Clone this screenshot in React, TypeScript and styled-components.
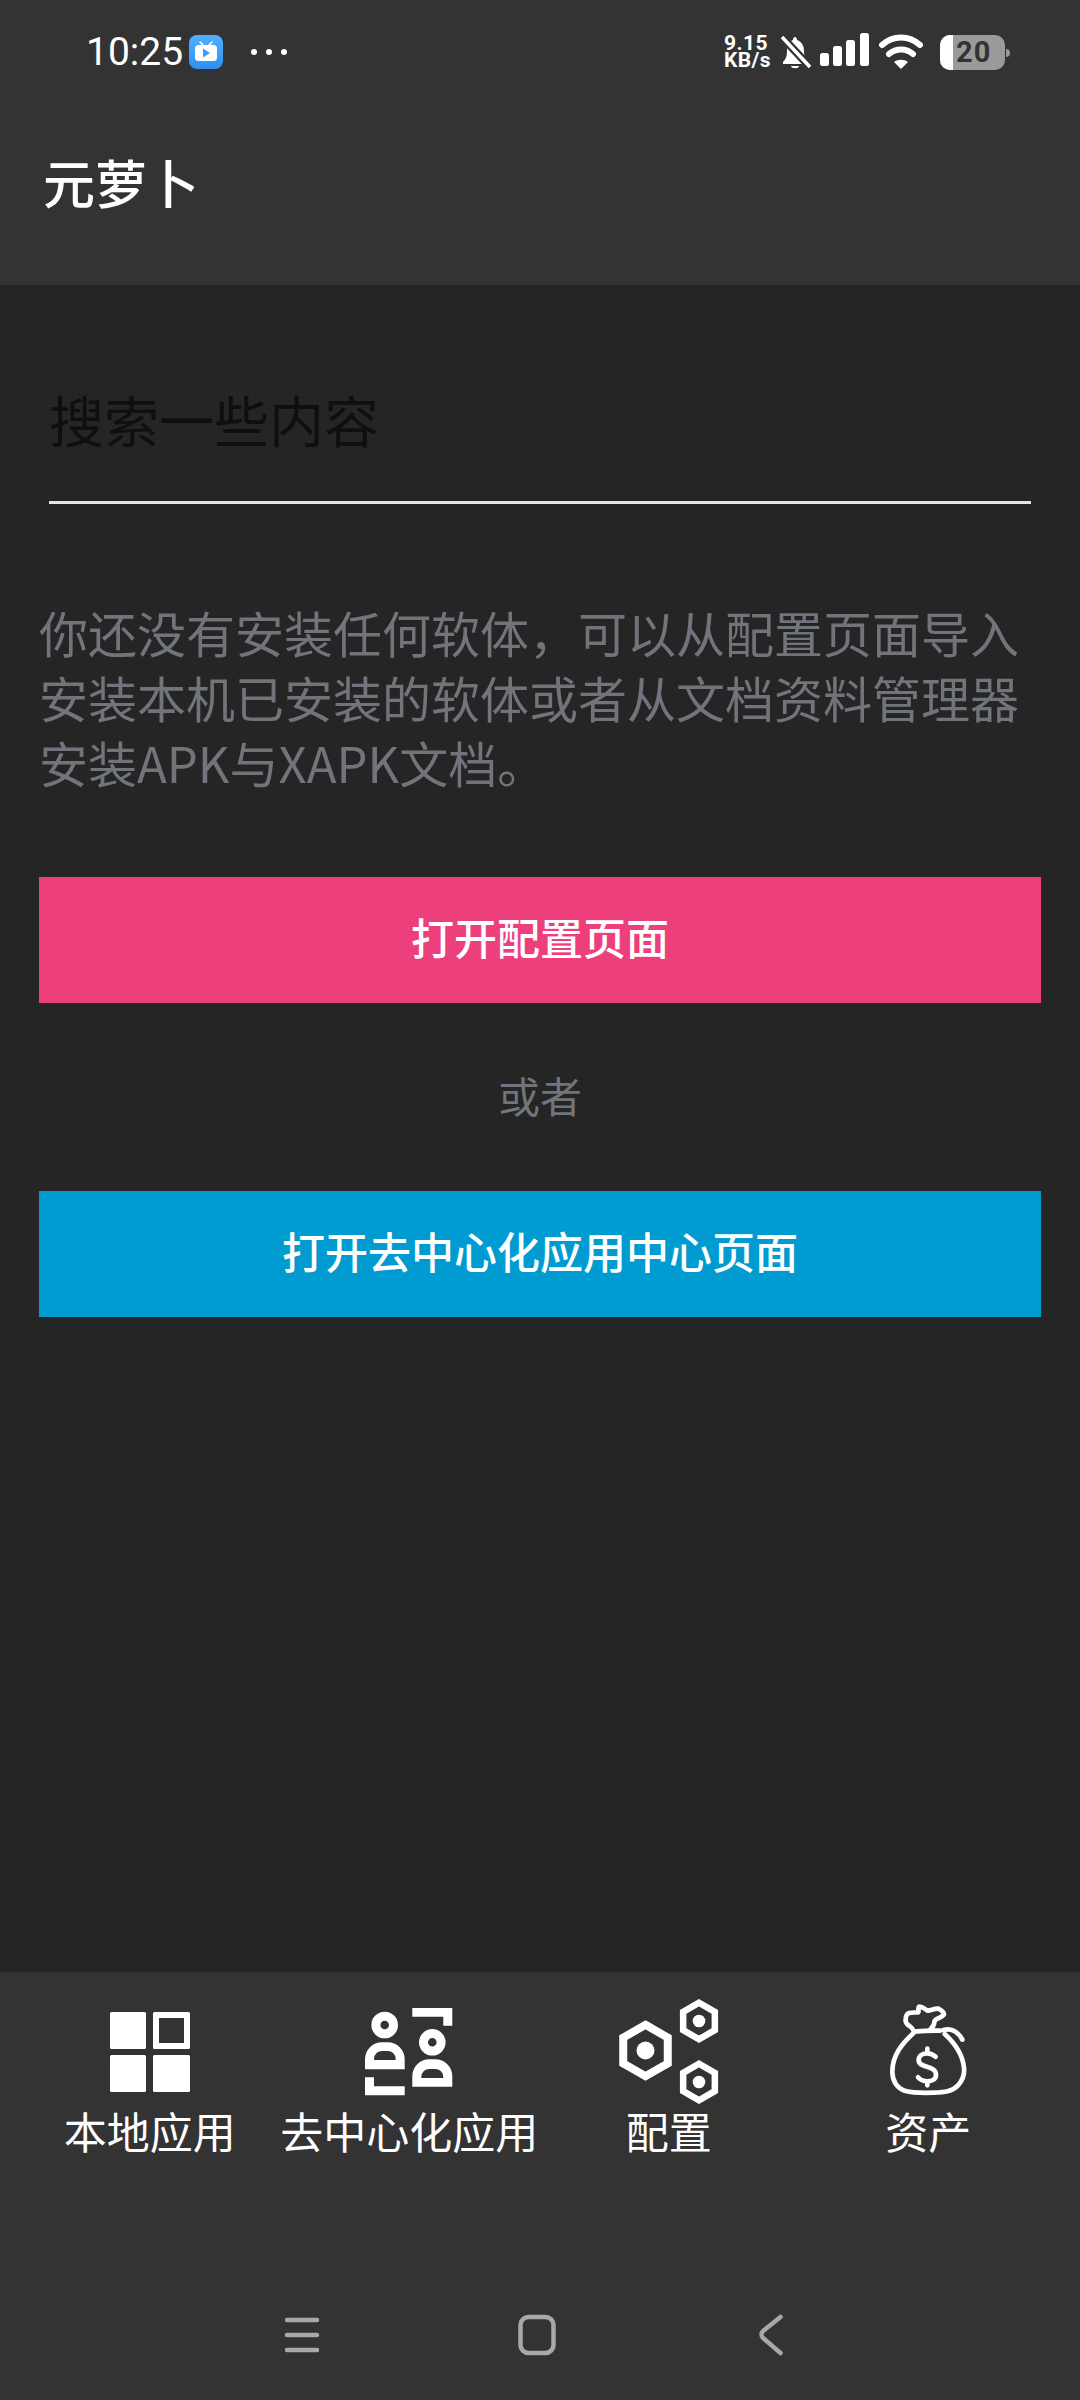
import React from "react";
import styled, { createGlobalStyle } from "styled-components";

const CJK = `"Noto Sans CJK SC", "Noto Sans", sans-serif`;

const Global = createGlobalStyle`
  html, body { margin: 0; padding: 0; background: #252525; }
  * { box-sizing: border-box; }
`;

const Screen = styled.div`
  width: 1080px;
  height: 2400px;
  display: flex;
  flex-direction: column;
  background: #252525;
  font-family: ${CJK};
  overflow: hidden;
`;

const Header = styled.header`
  height: 285px;
  background: #333333;
  display: flex;
  flex-direction: column;
`;

const StatusBar = styled.div`
  height: 104px;
  padding: 0 75px 0 86px;
  display: flex;
  align-items: center;
  justify-content: space-between;
`;

const StatusLeft = styled.div`
  display: flex;
  align-items: center;
`;

const Clock = styled.span`
  font-family: Roboto, sans-serif;
  font-size: 39px;
  color: #ffffff;
  line-height: 1;
  margin-right: 6px;
`;

const AppBadge = styled.svg`
  width: 34px;
  height: 34px;
  display: block;
`;

const MoreDots = styled.svg`
  width: 36px;
  height: 10px;
  margin-left: 28px;
  display: block;
`;

const StatusRight = styled.div`
  display: flex;
  align-items: center;
`;

const NetSpeed = styled.div`
  font-family: Roboto, sans-serif;
  font-weight: 700;
  font-size: 21px;
  line-height: 17px;
  letter-spacing: 0.4px;
  color: #ffffff;
  width: 50px;
  margin-right: 6px;
`;

const StatusIcon = styled.svg<{ $w: number; $gap: number }>`
  width: ${(p) => p.$w}px;
  height: 40px;
  display: block;
  margin-right: ${(p) => p.$gap}px;
`;

const Battery = styled.div`
  position: relative;
  width: 65px;
  height: 35px;
  border-radius: 10px;
  display: flex;
  background: #9a9a9a;
`;

const BatteryFill = styled.div`
  width: 13px;
  background: #ffffff;
  border-radius: 10px 0 0 10px;
`;

const BatteryLevel = styled.div`
  flex: 1;
  font-family: Roboto, sans-serif;
  font-weight: 700;
  font-size: 29px;
  line-height: 35px;
  letter-spacing: 1px;
  color: #333333;
  text-align: left;
  padding-left: 3px;
`;

const BatteryNub = styled.span`
  position: absolute;
  right: -5px;
  top: 14px;
  width: 4px;
  height: 8px;
  background: #9a9a9a;
  border-radius: 0 4px 4px 0;
`;

const AppBar = styled.div`
  flex: 1;
  padding: 0 43px 24px;
  display: flex;
  align-items: center;
`;

const Title = styled.h1`
  margin: 0;
  font-size: 52px;
  font-weight: 500;
  color: #ffffff;
  line-height: 1.2;
`;

const Main = styled.main`
  flex: 1;
  display: flex;
  flex-direction: column;
  padding: 0 39px;
`;

const SearchField = styled.input`
  display: block;
  margin: 97px 0 0 10px;
  width: 982px;
  height: 122px;
  background: transparent;
  border: none;
  border-bottom: 3px solid #e6e6e6;
  outline: none;
  padding: 0 0 47px 0;
  font-family: ${CJK};
  font-size: 55px;
  color: #ffffff;
  &::placeholder {
    color: #0f0f0f;
    opacity: 1;
  }
`;

const Notice = styled.p`
  margin: 95px 0 0;
  font-size: 49px;
  line-height: 65px;
  font-weight: 400;
  color: #71747b;
  width: 1002px;
`;

const ActionButton = styled.button<{ $bg: string }>`
  display: block;
  width: 1002px;
  height: 126px;
  border: none;
  padding: 0 0 8px;
  background: ${(p) => p.$bg};
  color: #ffffff;
  font-family: ${CJK};
  font-size: 43px;
  font-weight: 500;
`;

const Separator = styled.div`
  height: 188px;
  padding-bottom: 6px;
  display: flex;
  align-items: center;
  justify-content: center;
  font-size: 42px;
  color: #71747b;
`;

const TopAction = styled.div`
  margin-top: 83px;
`;

const Footer = styled.footer`
  height: 428px;
  background: #333333;
  display: flex;
  flex-direction: column;
`;

const Tabs = styled.nav`
  padding: 27px 0 0 20px;
  display: grid;
  grid-template-columns: repeat(4, 259.5px);
`;

const Tab = styled.div`
  display: flex;
  flex-direction: column;
  align-items: center;
`;

const TabIconBox = styled.div`
  height: 105px;
  display: flex;
  align-items: center;
  justify-content: center;
`;

const TabLabel = styled.span`
  margin-top: -2px;
  font-size: 43px;
  line-height: 56px;
  color: #ffffff;
`;

const SystemNav = styled.div`
  margin-top: 152px;
  height: 50px;
  padding-left: 284px;
  display: flex;
  align-items: center;
`;

const SysIcon = styled.svg<{ $w: number; $gap: number }>`
  width: ${(p) => p.$w}px;
  height: 44px;
  margin-right: ${(p) => p.$gap}px;
  display: block;
  fill: none;
  stroke: #a8a8a8;
  stroke-width: 4.5;
  stroke-linecap: round;
  stroke-linejoin: round;
`;

const GridIcon = () => (
  <svg width="80" height="80" viewBox="0 0 80 80" fill="#fff">
    <rect x="0" y="0" width="36" height="37" rx="1.5" />
    <path fillRule="evenodd" d="M44.5 0h34A1.5 1.5 0 0 1 80 1.5v34a1.5 1.5 0 0 1-1.5 1.5h-34A1.5 1.5 0 0 1 43 35.500v-34A1.500 1.500 0 0 1 44.500 0zM49 6v25h25V6z" />
    <rect x="0" y="43" width="36" height="37" rx="1.500" />
    <rect x="43" y="43" width="37" height="37" rx="1.500" />
  </svg>
);

const DecentralIcon = () => (
  <svg width="88" height="88" viewBox="0 0 88 88" fill="#fff">
    <path fillRule="evenodd" d="M19.700 3.700a13.300 13.300 0 1 0 0 26.600 13.300 13.300 0 0 0 0-26.600zm0 9a4.300 4.300 0 1 1 0 8.600 4.300 4.300 0 0 1 0-8.600z" />
    <path fillRule="evenodd" d="M0 61.300V51.300a17 17 0 0 1 17-17h5.700a17 17 0 0 1 17 17v10zM9 52h21.700v-1a8 8 0 0 0-8-8H17a8 8 0 0 0-8 8z" />
    <path d="M0 69.300h9v9h30.700v9H0z" />
    <path d="M47.300 0h40v17.700h-9V8.700h-31z" />
    <path fillRule="evenodd" d="M67.300 21a13.300 13.300 0 1 0 0 26.600 13.300 13.300 0 0 0 0-26.600zm0 9a4.300 4.300 0 1 1 0 8.600 4.300 4.300 0 0 1 0-8.600z" />
    <path fillRule="evenodd" d="M47.300 78.700V68.300a17 17 0 0 1 17-17h6a17 17 0 0 1 17 17v10.400zM56.300 70h22v-1a8 8 0 0 0-8-8h-6a8 8 0 0 0-8 8z" />
  </svg>
);

const HexNut = ({ cx, cy, r, sw, dot }: { cx: number; cy: number; r: number; sw: number; dot: number }) => {
  const h = r * 0.866;
  const d = `M${cx} ${cy - r}L${cx + h} ${cy - r / 2}V${cy + r / 2}L${cx} ${cy + r}L${cx - h} ${cy + r / 2}V${cy - r / 2}Z`;
  return (
    <>
      <path d={d} fill="none" stroke="#fff" strokeWidth={sw} strokeLinejoin="miter" />
      <circle cx={cx} cy={cy} r={dot} fill="#fff" />
    </>
  );
};

const HexIcon = () => (
  <svg width="100" height="105" viewBox="1 0 100 105">
    <HexNut cx={27.500} cy={51.500} r={25.700} sw={8} dot={9} />
    <HexNut cx={81} cy={22} r={18.300} sw={6.500} dot={6.300} />
    <HexNut cx={81} cy={83} r={18.300} sw={6.500} dot={6.300} />
  </svg>
);

const MoneyBagIcon = () => (
  <svg width="88" height="103" viewBox="0 0 264 309" fill="none" stroke="#fff" strokeWidth="14" strokeLinecap="round" strokeLinejoin="round">
    <path d="M88 100C55 130 25 165 25 215c0 25 12 50 40 58 25 7 55 6 85 5 30-1 55-3 72-22 13-14 20-32 18-52-4-42-28-75-58-102" />
    <path d="M90 95c25-2 55-4 78-3M90 95c-2-7-6-12-12-16-7-4-14-8-13-18 0-11 4-20 10-22 9-2 18-1 28-2 2-6-2-12 2-17 8-2 16 6 26 12 12-2 22-7 32-6 8 4 16 10 17 17-2 6-12 9-20 13-8 3-10 10-10 16-1 6-6 9-10 15" />
    <path d="M178 90c12-3 26-2 36 5 9 6 16 14 21 24" />
    <path d="M155 170c-7-6-15-10-25-10-15 0-26 8-26 20 0 26 52 15 52 44 0 13-11 20-26 20-12 0-22-5-28-12M130 146v14M130 244v12" />
  </svg>
);

export default function App() {
  return (
    <>
      <Global />
      <Screen>
        <Header>
          <StatusBar>
            <StatusLeft>
              <Clock>10:25</Clock>
              <AppBadge viewBox="0 0 34 34">
                <defs>
                  <linearGradient id="badge" x1="0" y1="0" x2="0" y2="1">
                    <stop offset="0" stopColor="#52aeff" />
                    <stop offset="1" stopColor="#2f90f2" />
                  </linearGradient>
                </defs>
                <rect width="34" height="34" rx="8" fill="url(#badge)" />
                <path d="M11 7l4 4M23 7l-4 4" stroke="#fff" strokeWidth="1.600" strokeLinecap="round" />
                <rect x="6" y="10" width="22" height="16" rx="3.500" fill="#fff" />
                <path d="M14 13.500l7 4.500-7 4.500z" fill="#3d9cf8" />
              </AppBadge>
              <MoreDots viewBox="0 0 36 10">
                <circle cx="3" cy="5" r="3" fill="#fff" />
                <circle cx="18" cy="5" r="3" fill="#fff" />
                <circle cx="33" cy="5" r="3" fill="#fff" />
              </MoreDots>
            </StatusLeft>
            <StatusRight>
              <NetSpeed>
                9.15
                <br />
                KB/s
              </NetSpeed>
              <StatusIcon $w={32} $gap={8} viewBox="0 0 32 40">
                <path d="M15 5c-1 0-2 1-2 3-5 2-6 6-6 11 0 5-1 8-4 11v2h25v-2c-3-3-4-6-4-11 0-5-2-9-7-11 0-2-1-3-2-3z" fill="#fff" />
                <path d="M11 34h8c0 3-8 3-8 0z" fill="#fff" />
                <path d="M2 5l28 30" stroke="#333" strokeWidth="8" />
                <path d="M2 5l28 30" stroke="#fff" strokeWidth="3.500" />
              </StatusIcon>
              <StatusIcon $w={49} $gap={10} viewBox="0 0 49 40">
                <rect x="0" y="21" width="9" height="13" rx="2.500" fill="#fff" />
                <rect x="13" y="14" width="9" height="20" rx="2.500" fill="#fff" />
                <rect x="26" y="8" width="9" height="26" rx="2.500" fill="#fff" />
                <rect x="40" y="1" width="9" height="33" rx="2.500" fill="#fff" />
              </StatusIcon>
              <StatusIcon $w={44} $gap={17} viewBox="0 0 44 40">
                <path d="M3 13c11-10 27-10 38 0" stroke="#fff" strokeWidth="6" fill="none" strokeLinecap="round" />
                <path d="M10 22c7-6 17-6 24 0" stroke="#fff" strokeWidth="6" fill="none" strokeLinecap="round" />
                <path d="M15 30c4-3 10-3 14 0l-7 7z" fill="#fff" />
              </StatusIcon>
              <Battery>
                <BatteryFill />
                <BatteryLevel>20</BatteryLevel>
                <BatteryNub />
              </Battery>
            </StatusRight>
          </StatusBar>
          <AppBar>
            <Title>元萝卜</Title>
          </AppBar>
        </Header>
        <Main>
          <SearchField placeholder="搜索一些内容" readOnly />
          <Notice>你还没有安装任何软体，可以从配置页面导入安装本机已安装的软体或者从文档资料管理器安装APK与XAPK文档。</Notice>
          <TopAction>
            <ActionButton $bg="#ee3f7d">打开配置页面</ActionButton>
          </TopAction>
          <Separator>或者</Separator>
          <ActionButton $bg="#009bd0">打开去中心化应用中心页面</ActionButton>
        </Main>
        <Footer>
          <Tabs>
            <Tab>
              <TabIconBox><GridIcon /></TabIconBox>
              <TabLabel>本地应用</TabLabel>
            </Tab>
            <Tab>
              <TabIconBox><DecentralIcon /></TabIconBox>
              <TabLabel>去中心化应用</TabLabel>
            </Tab>
            <Tab>
              <TabIconBox><HexIcon /></TabIconBox>
              <TabLabel>配置</TabLabel>
            </Tab>
            <Tab>
              <TabIconBox><MoneyBagIcon /></TabIconBox>
              <TabLabel>资产</TabLabel>
            </Tab>
          </Tabs>
          <SystemNav>
            <SysIcon $w={36} $gap={198} viewBox="0 0 36 44">
              <path d="M3 7h30M3 22h30M3 37h30" />
            </SysIcon>
            <SysIcon $w={38} $gap={203} viewBox="0 0 38 44">
              <rect x="2.500" y="4" width="33" height="36" rx="8" />
            </SysIcon>
            <SysIcon $w={24} $gap={0} viewBox="0 0 24 44">
              <path d="M21.500 4L4 18c-2 2-2 5 0 7l17.500 15" />
            </SysIcon>
          </SystemNav>
        </Footer>
      </Screen>
    </>
  );
}
